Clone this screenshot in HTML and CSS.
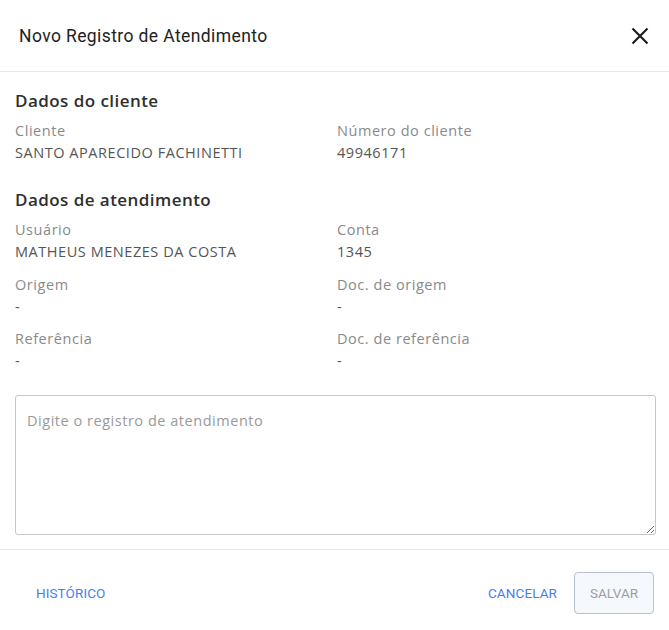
FILE: index.html
```html
<!DOCTYPE html>
<html lang="pt">
<head>
<meta charset="utf-8">
<link rel="stylesheet" href="styles.css">
</head>
<body>
<div class="dialog">
  <header class="header">
    <h1 class="title">Novo Registro de Atendimento</h1>
    <button class="close" aria-label="Fechar">
      <svg width="18" height="18" viewBox="0 0 18 18"><path d="M1.5 1.5 L16.5 16.5 M16.5 1.5 L1.5 16.5" stroke="#1f1f1f" stroke-width="2.2" fill="none"/></svg>
    </button>
  </header>
  <main class="content">
    <section class="section">
      <h2 class="section-title">Dados do cliente</h2>
      <div class="grid">
        <div class="field"><div class="label">Cliente</div><div class="value">SANTO APARECIDO FACHINETTI</div></div>
        <div class="field"><div class="label">Número do cliente</div><div class="value">49946171</div></div>
      </div>
    </section>
    <section class="section">
      <h2 class="section-title">Dados de atendimento</h2>
      <div class="grid">
        <div class="field"><div class="label">Usuário</div><div class="value">MATHEUS MENEZES DA COSTA</div></div>
        <div class="field"><div class="label">Conta</div><div class="value">1345</div></div>
        <div class="field"><div class="label">Origem</div><div class="value">-</div></div>
        <div class="field"><div class="label">Doc. de origem</div><div class="value">-</div></div>
        <div class="field"><div class="label">Referência</div><div class="value">-</div></div>
        <div class="field"><div class="label">Doc. de referência</div><div class="value">-</div></div>
      </div>
    </section>
    <textarea class="textarea" placeholder="Digite o registro de atendimento"></textarea>
  </main>
  <footer class="footer">
    <button class="link-btn">HISTÓRICO</button>
    <div class="actions">
      <button class="link-btn">CANCELAR</button>
      <button class="save-btn" disabled>SALVAR</button>
    </div>
  </footer>
</div>
</body>
</html>
```
FILE: styles.css
```css
* { box-sizing: border-box; }
html, body { margin: 0; padding: 0; background: #fff; }
body { font-family: "Open Sans", "Noto Sans", sans-serif; color: #333; }
.dialog { width: 669px; height: 630px; display: flex; flex-direction: column; }
.header {
  height: 72px;
  padding: 0 20px 0 19px;
  display: flex;
  align-items: center;
  justify-content: space-between;
  border-bottom: 1px solid #e4e9f0;
}
.title { margin: 0; font-family: Roboto, sans-serif; font-weight: 400; font-size: 17.5px; letter-spacing: 0.4px; color: #222; }
.close { background: none; border: 0; padding: 0; width: 18px; height: 18px; cursor: pointer; }
.close svg { display: block; }
.content { padding: 18px 13px 14px 15px; display: flex; flex-direction: column; }
.section { margin-bottom: 25px; }
.section:last-of-type { margin-bottom: 15px; }
.section-title { margin: 0 0 8px; font-size: 17px; font-weight: 600; letter-spacing: 0.45px; color: #2e2e2e; line-height: 22px; }
.grid { display: grid; grid-template-columns: 322px 1fr; row-gap: 10.5px; }
.label { font-size: 14.5px; letter-spacing: 0.55px; color: #8a8a8a; line-height: 22px; }
.value { font-size: 14.5px; letter-spacing: 0.55px; color: #555; line-height: 22px; }
.textarea {
  margin-top: 8px;
  width: 641px;
  height: 140px;
  border: 1px solid #c6c6c6;
  border-radius: 3px;
  padding: 15px 11px;
  font-family: "Open Sans", sans-serif;
  font-size: 14.5px;
  letter-spacing: 0.53px;
  color: #333;
  resize: vertical;
}
.textarea::placeholder { color: #9a9a9a; }
.footer {
  margin-top: auto;
  height: 81px;
  border-top: 1px solid #e4e6ee;
  padding: 6px 15px 0 21px;
  display: flex;
  align-items: center;
  justify-content: space-between;
}
.actions { display: flex; align-items: center; gap: 2px; }
.link-btn {
  background: none; border: 0; padding: 8px 15px;
  font-family: Roboto, sans-serif; font-size: 13.5px; color: #4a7ef0; letter-spacing: 0.1px; cursor: pointer;
}
.save-btn {
  width: 80px; height: 42px;
  border: 1px solid #b9c0cf; border-radius: 4px;
  background: #f5f8fc;
  font-family: Roboto, sans-serif; font-size: 13.5px; color: #9aa0aa;
}
```
